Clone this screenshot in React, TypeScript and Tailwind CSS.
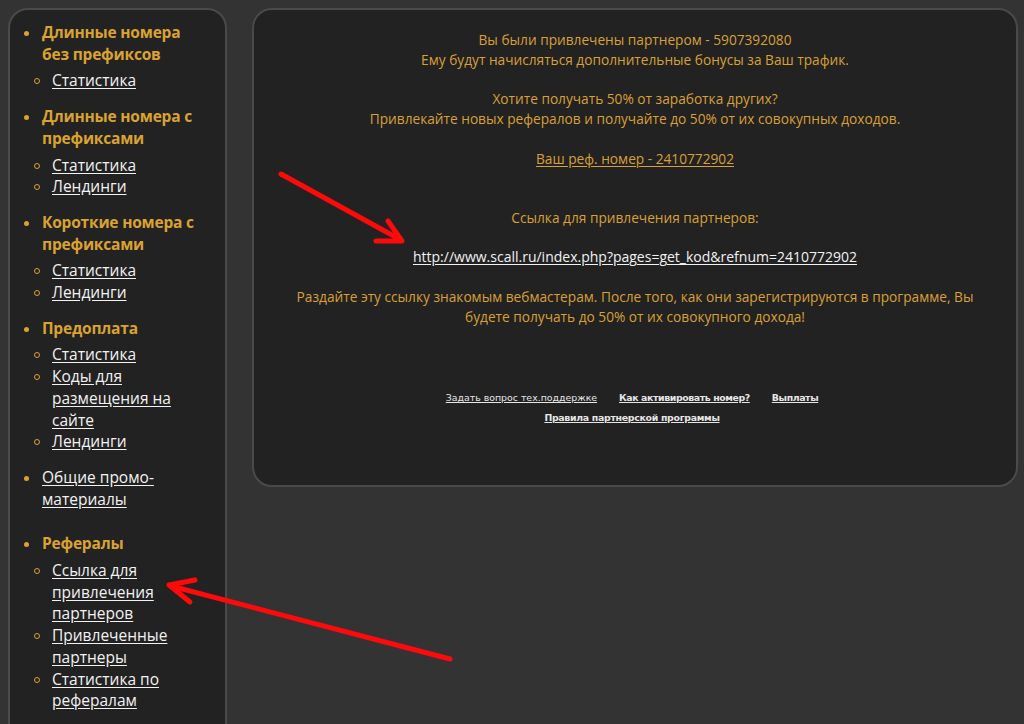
import React from 'react'

type Section = { title: string; link?: boolean; items: string[]; extraGap?: boolean }

const SECTIONS: Section[] = [
  { title: 'Длинные номера без префиксов', items: ['Статистика'] },
  { title: 'Длинные номера с префиксами', items: ['Статистика', 'Лендинги'] },
  { title: 'Короткие номера с префиксами', items: ['Статистика', 'Лендинги'] },
  { title: 'Предоплата', items: ['Статистика', 'Коды для размещения на сайте', 'Лендинги'] },
  { title: 'Общие промо-материалы', link: true, items: [], extraGap: true },
  { title: 'Рефералы', items: ['Ссылка для привлечения партнеров', 'Привлеченные партнеры', 'Статистика по рефералам'] },
]

const font = { fontFamily: '"Open Sans", "Noto Sans", sans-serif' }

function SideSection({ s }: { s: Section }) {
  return (
    <li className={s.extraGap ? 'mb-[23px]' : 'mb-[14px]'}>
      <div className="flex">
        <span className="w-[32px] shrink-0 flex justify-center pt-[9px]">
          <span className="block w-[5px] h-[5px] rounded-full bg-[#dba22f]" />
        </span>
        {s.link ? (
          <a href="#" className="text-[#f2f2f2] underline underline-offset-2 text-[15.5px] leading-[21.7px] w-[150px]">
            {s.title}
          </a>
        ) : (
          <span className="font-bold text-[#dba22f] text-[15.5px] leading-[21.7px] tracking-[-0.2px] w-[152px]">
            {s.title}
          </span>
        )}
      </div>
      {s.items.length > 0 && (
        <ul className="mt-[5px]">
          {s.items.map((it) => (
            <li key={it} className="flex">
              <span className="w-[42px] shrink-0 flex justify-end pr-[12px] pt-[8px]">
                <span className="block w-[6px] h-[6px] rounded-full border border-[#dba22f]" />
              </span>
              <a href="#" className="text-[#f2f2f2] underline underline-offset-2 text-[15.5px] leading-[21.7px] w-[150px]">
                {it}
              </a>
            </li>
          ))}
        </ul>
      )}
    </li>
  )
}

function Arrows() {
  return (
    <svg className="absolute inset-0 pointer-events-none" width="1024" height="724">
      <g stroke="#ff0a0a" strokeWidth="5" strokeLinecap="round" strokeLinejoin="round" fill="none">
        <line x1="281" y1="174" x2="401" y2="240" />
        <polyline points="376,241 402,241 388,221" />
        <line x1="450" y1="659" x2="171" y2="586" />
        <polyline points="195,580 169,585 190,602" />
      </g>
    </svg>
  )
}

export default function App() {
  return (
    <div className="relative h-[724px] overflow-hidden bg-[#333333] flex gap-[25px] pl-[8px] pt-[8px]" style={font}>
      <aside className="w-[219px] shrink-0 h-[760px] bg-[#222222] border-2 border-[#4a4a4a] rounded-[20px] pt-[12px]">
        <ul>
          {SECTIONS.map((s) => (
            <SideSection key={s.title} s={s} />
          ))}
        </ul>
      </aside>

      <main className="w-[766px] h-[479px] bg-[#222222] border-2 border-[#4a4a4a] rounded-[20px] pt-[20px] text-center text-[#d9a034] text-[13.7px] leading-[19.75px]">
        <p>Вы были привлечены партнером - 5907392080</p>
        <p>Ему будут начисляться дополнительные бонусы за Ваш трафик.</p>
        <p className="mt-[19.75px]">Хотите получать 50% от заработка других?</p>
        <p>Привлекайте новых рефералов и получайте до 50% от их совокупных доходов.</p>
        <p className="mt-[19.75px]">
          <a href="#" className="underline underline-offset-2">Ваш реф. номер - 2410772902</a>
        </p>
        <p className="mt-[39.5px]">Ссылка для привлечения партнеров:</p>
        <p className="mt-[19.75px]">
          <a href="#" className="text-[#f2f2f2] underline underline-offset-2 text-[14px]">
            http://www.scall.ru/index.php?pages=get_kod&amp;refnum=2410772902
          </a>
        </p>
        <p className="mt-[19.75px] px-[30px]">
          Раздайте эту ссылку знакомым вебмастерам. После того, как они зарегистрируются в программе, Вы будете получать до 50% от их совокупного дохода!
        </p>

        <div className="mt-[62px] -ml-[6px] text-[9.4px] leading-[20px] text-[#e6e6e6]" style={{ fontFamily: '"DejaVu Sans", Verdana, sans-serif' }}>
          <div className="flex justify-center gap-[22px]">
            <a href="#" className="underline">Задать вопрос тех.поддержке</a>
            <a href="#" className="underline font-bold tracking-[-0.4px]">Как активировать номер?</a>
            <a href="#" className="underline font-bold tracking-[-0.4px]">Выплаты</a>
          </div>
          <div>
            <a href="#" className="underline font-bold tracking-[-0.3px]">Правила партнерской программы</a>
          </div>
        </div>
      </main>

      <Arrows />
    </div>
  )
}
